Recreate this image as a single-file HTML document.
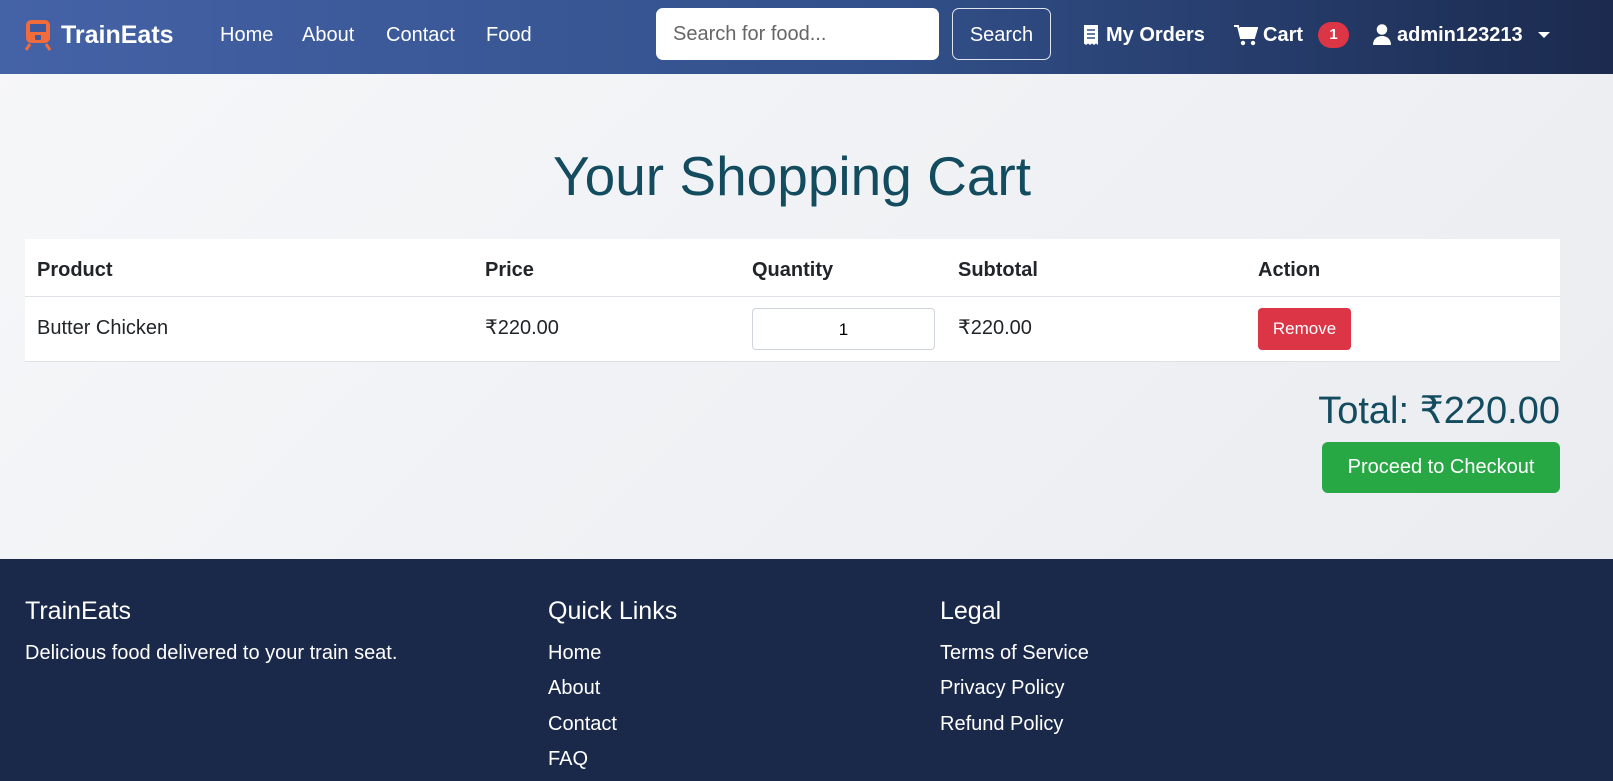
<!DOCTYPE html>
<html><head><meta charset="utf-8"><style>
*{box-sizing:border-box;margin:0;padding:0}
body{width:1613px;height:781px;overflow:hidden;font-family:"Liberation Sans",sans-serif;background:linear-gradient(135deg,#f6f7f9,#e9ebef);position:relative}
.nav{position:absolute;left:0;top:0;width:1613px;height:74px;background:linear-gradient(90deg,#4462a6,#32508a 55%,#1b2a4e);color:#fff}
.a{position:absolute;font-size:20px;top:24px;color:#fff;white-space:nowrap}
.b{font-weight:bold}
.search{position:absolute;left:656px;top:8px;width:283px;height:52px;background:#fff;border-radius:7px;color:#666;font-size:20px;padding:15px 17px}
.sbtn{position:absolute;left:952px;top:8px;width:99px;height:52px;border:1px solid #dfe4ee;border-radius:7px;color:#fff;font-size:20px;text-align:center;line-height:52px}
.badge{position:absolute;left:1318px;top:22px;width:31px;height:26px;background:#dc3545;border-radius:13px;color:#fff;font-size:15px;font-weight:bold;text-align:center;line-height:26px}
h1{position:absolute;left:0;width:1584px;text-align:center;top:144px;font-size:55px;font-weight:normal;color:#134b5f}
.tbl{position:absolute;left:25px;top:239px;width:1535px;height:123px;background:#fff}
.hr{position:absolute;left:0;width:100%;height:1px;background:#dee2e6}
.th{position:absolute;top:20px;font-weight:bold;font-size:20px;color:#212529}
.td{position:absolute;top:78px;font-size:20px;color:#212529}
.inp{position:absolute;left:727px;top:69px;width:183px;height:42px;border:1px solid #ced4da;border-radius:4px;text-align:center;line-height:42px;font-size:17px}
.rm{position:absolute;left:1233px;top:69px;width:93px;height:42px;background:#dc3545;border-radius:4px;color:#fff;font-size:17px;text-align:center;line-height:42px}
.total{position:absolute;right:53px;top:388px;font-size:38px;color:#134b5f}
.chk{position:absolute;left:1322px;top:442px;width:238px;height:51px;background:#28a745;border-radius:6px;color:#fff;font-size:20px;text-align:center;line-height:51px}
.foot{position:absolute;left:0;top:559px;width:1613px;height:222px;background:#1a2849;color:#fff}
.fh{position:absolute;top:38px;font-size:25px}
.fl{position:absolute;font-size:20px}
</style></head><body>
<div class="nav">
<svg style="position:absolute;left:25px;top:19px" width="26" height="32" viewBox="0 0 26 32"><rect x="1" y="1" width="24" height="23" rx="5" fill="#f26b3a"/><rect x="5" y="5" width="16" height="8" fill="#3e5a9c"/><rect x="10" y="16" width="6" height="5" rx="1" fill="#3e5a9c"/><path d="M5 25 L1 31 M21 25 L25 31" stroke="#f26b3a" stroke-width="3"/></svg>
<div class="a b" style="left:61px;top:21px;font-size:25px">TrainEats</div>
<div class="a" style="left:220px">Home</div>
<div class="a" style="left:302px">About</div>
<div class="a" style="left:386px">Contact</div>
<div class="a" style="left:486px">Food</div>
<div class="search">Search for food...</div>
<div class="sbtn">Search</div>
<svg style="position:absolute;left:1083px;top:24px" width="16" height="22" viewBox="0 0 16 22"><path d="M1 1h14v20l-2-1.5-2 1.5-2-1.5-2 1.5-2-1.5-2 1.5-2-1.5z" fill="#fff"/><path d="M4 6h8M4 10h8M4 14h8" stroke="#32508a" stroke-width="1.6"/></svg>
<div class="a b" style="left:1106px">My Orders</div>
<svg style="position:absolute;left:1234px;top:24px" width="24" height="22" viewBox="0 0 24 22"><path d="M0 2h4l3 12h13l3-10H6" fill="#fff" stroke="#fff" stroke-width="2"/><circle cx="9" cy="19" r="2.2" fill="#fff"/><circle cx="19" cy="19" r="2.2" fill="#fff"/></svg>
<div class="a b" style="left:1263px">Cart</div>
<div class="badge">1</div>
<svg style="position:absolute;left:1372px;top:24px" width="20" height="21" viewBox="0 0 20 21"><circle cx="10" cy="5.5" r="5.3" fill="#fff"/><path d="M1 21c0-6 4-9 9-9s9 3 9 9z" fill="#fff"/></svg>
<div class="a b" style="left:1397px">admin123213</div>
<div style="position:absolute;left:1538px;top:32px;border-left:6px solid transparent;border-right:6px solid transparent;border-top:6px solid #fff"></div>
</div>
<h1>Your Shopping Cart</h1>
<div class="tbl">
<div class="th" style="left:12px">Product</div>
<div class="th" style="left:460px">Price</div>
<div class="th" style="left:727px">Quantity</div>
<div class="th" style="left:933px">Subtotal</div>
<div class="th" style="left:1233px">Action</div>
<div class="hr" style="top:57px"></div>
<div class="td" style="left:12px">Butter Chicken</div>
<div class="td" style="left:460px;top:76px">₹220.00</div>
<div class="inp">1</div>
<div class="td" style="left:933px;top:76px">₹220.00</div>
<div class="rm">Remove</div>
<div class="hr" style="top:122px"></div>
</div>
<div class="total">Total: ₹220.00</div>
<div class="chk">Proceed to Checkout</div>
<div class="foot">
<div class="fh" style="left:25px">TrainEats</div>
<div class="fl" style="left:25px;top:83px">Delicious food delivered to your train seat.</div>
<div class="fh" style="left:548px">Quick Links</div>
<div class="fl" style="left:548px;top:83px">Home</div>
<div class="fl" style="left:548px;top:118px">About</div>
<div class="fl" style="left:548px;top:154px">Contact</div>
<div class="fl" style="left:548px;top:189px">FAQ</div>
<div class="fh" style="left:940px">Legal</div>
<div class="fl" style="left:940px;top:83px">Terms of Service</div>
<div class="fl" style="left:940px;top:118px">Privacy Policy</div>
<div class="fl" style="left:940px;top:154px">Refund Policy</div>
</div>
</body></html>
